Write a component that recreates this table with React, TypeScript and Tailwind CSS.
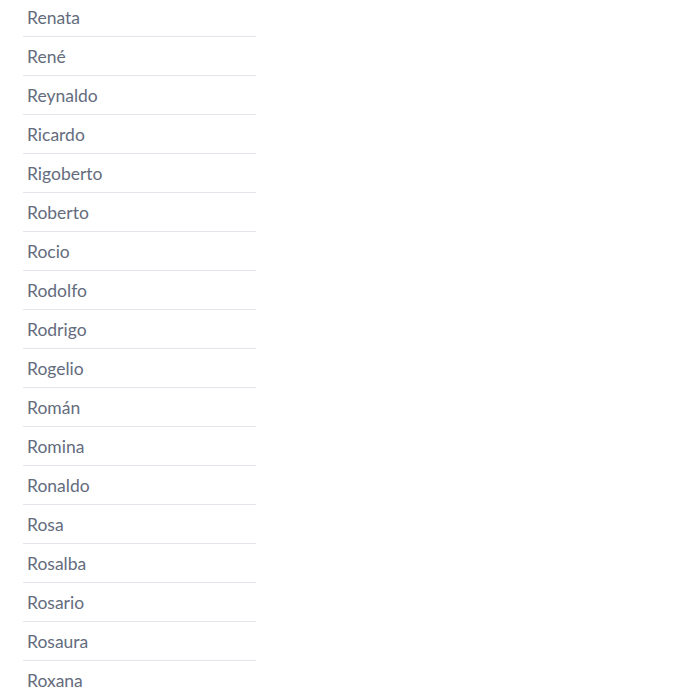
import React from "react";

const NAMES = [
  "Renata",
  "René",
  "Reynaldo",
  "Ricardo",
  "Rigoberto",
  "Roberto",
  "Rocio",
  "Rodolfo",
  "Rodrigo",
  "Rogelio",
  "Román",
  "Romina",
  "Ronaldo",
  "Rosa",
  "Rosalba",
  "Rosario",
  "Rosaura",
  "Roxana",
];

export default function App() {
  return (
    <div className="h-[696px] overflow-hidden bg-white">
      <ul className="mt-[-2px] ml-[23px] w-[233px] font-['Lato',sans-serif] text-[17.5px] text-[#646c7d]">
        {NAMES.map((name) => (
          <li
            key={name}
            className="h-[39px] border-b border-[#e4e4ea] pl-1 pt-px leading-[38px]"
          >
            {name}
          </li>
        ))}
      </ul>
    </div>
  );
}
